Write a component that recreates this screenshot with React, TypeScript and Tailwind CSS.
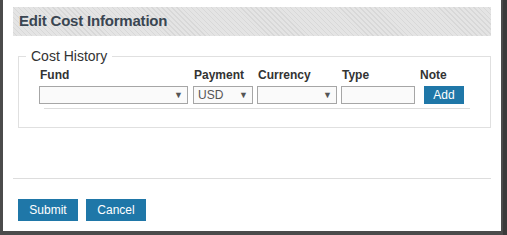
import React from "react";

const font = { fontFamily: '"Liberation Sans", Arial, sans-serif' };

function Select({ w, value }: { w: string; value?: string }) {
  return (
    <div className={`${w} h-[18px] border border-[#a6a6a6] bg-[#fafafa] flex items-center justify-between pl-[4px] pr-[4px] text-[12px] text-[#555]`}>
      <span className="leading-none">{value ?? ""}</span>
      <span className="text-[9px] text-[#555] leading-none">▼</span>
    </div>
  );
}

export default function App() {
  return (
    <div style={font} className="w-[507px] h-[235px] bg-[#4b4b4b] flex">
      <div className="ml-[3px] w-[498px] h-[231px] bg-white flex flex-col">
        <div className="ml-[10px] mt-[7px] w-[478px] h-[29px] bg-[repeating-linear-gradient(45deg,#e4e4e4_0px,#e4e4e4_2.5px,#d8d8d8_2.5px,#d8d8d8_3.5px)] flex items-center pl-[6px]">
          <span className="text-[15px] font-bold text-[#3a4652] tracking-[-0.2px]">Edit Cost Information</span>
        </div>
        <fieldset className="ml-[15px] mt-[12px] w-[473px] border border-[#e0e0e0] pl-[7px] pb-[18px]">
          <legend className="px-[5px] text-[14px] leading-[16px] text-[#333]">Cost History</legend>
          <div className="ml-[13px] mt-[4px] flex items-end">
            <div className="flex flex-col w-[149px]">
              <span className="pl-[1px] text-[12px] font-bold leading-[14px] text-[#333]">Fund</span>
              <div className="mt-[4px]"><Select w="w-[149px]" /></div>
            </div>
            <div className="flex flex-col ml-[5px] w-[60px]">
              <span className="pl-[1px] text-[12px] font-bold leading-[14px] text-[#333]">Payment</span>
              <div className="mt-[4px]"><Select w="w-[60px]" value="USD" /></div>
            </div>
            <div className="flex flex-col ml-[4px] w-[80px]">
              <span className="pl-[1px] text-[12px] font-bold leading-[14px] text-[#333]">Currency</span>
              <div className="mt-[4px]"><Select w="w-[80px]" /></div>
            </div>
            <div className="flex flex-col ml-[4px] w-[74px]">
              <span className="pl-[1px] text-[12px] font-bold leading-[14px] text-[#333]">Type</span>
              <div className="mt-[4px] w-[74px] h-[18px] border border-[#a6a6a6] bg-[#fafafa]" />
            </div>
            <div className="flex flex-col ml-[5px]">
              <span className="text-[12px] font-bold leading-[14px] text-[#333]">Note</span>
              <button className="mt-[4px] ml-[4px] w-[40px] h-[18px] bg-[#1f77a8] text-white text-[12px] leading-none">Add</button>
            </div>
          </div>
          <div className="mt-[4px] ml-[18px] w-[426px] h-[1px] bg-[#dcdcdc]" />
        </fieldset>
        <div className="ml-[10px] mt-[50px] w-[478px] h-[1px] bg-[#dddddd]" />
        <div className="ml-[15px] mt-[20px] flex gap-[8px]">
          <button className="w-[60px] h-[22px] bg-[#1f77a8] text-white text-[12px] leading-none">Submit</button>
          <button className="w-[60px] h-[22px] bg-[#1f77a8] text-white text-[12px] leading-none">Cancel</button>
        </div>
      </div>
      <div className="ml-[2px] w-[4px] h-[235px] bg-[#3a3a3a]" />
    </div>
  );
}
